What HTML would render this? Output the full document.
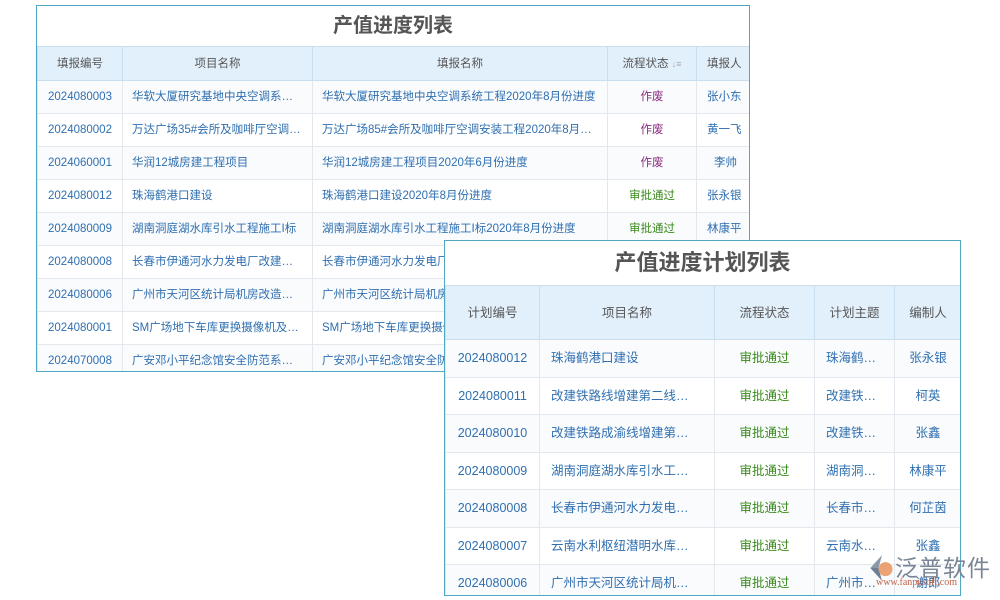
<!DOCTYPE html>
<html><head><meta charset="utf-8"><style>
*{margin:0;padding:0;box-sizing:border-box}
body{width:1000px;height:600px;background:#fff;position:relative;overflow:hidden;font-family:"Liberation Sans","Noto Sans CJK SC",sans-serif}
.t{position:absolute;background:#fff;border:1px solid #4fa7c4;overflow:hidden}
.title{text-align:center;font-weight:bold;color:#555;border-bottom:1px solid #a9cfe6}
table{border-collapse:collapse;table-layout:fixed;position:absolute;left:0}
td,th{border:1px solid #e3e8ee;white-space:nowrap;overflow:hidden;color:#2f6fb0;font-weight:normal;line-height:14px;vertical-align:middle;padding-top:0;padding-bottom:0}
th{background:#e2f0fc;color:#555;border-color:#c9dff0}
tr:nth-child(even) td{background:#fafbfd}
.c{text-align:center}
.n{text-align:center}
.n b{font-weight:normal;position:relative;top:0}
.g{color:#3a8a1c!important;text-align:center}
.p{color:#8a2a80!important;text-align:center}
</style></head><body>

<div class="t" style="left:36px;top:5px;width:714px;height:367px">
<div class="title" style="height:41px;line-height:40px;font-size:20px">产值进度列表</div>
<table style="top:40px;width:730px;font-size:11.5px">
<colgroup><col style="width:85px"><col style="width:190px"><col style="width:295px"><col style="width:89px"><col style="width:71px"></colgroup>
<tr style="height:34px"><th>填报编号</th><th>项目名称</th><th>填报名称</th><th>流程状态 <span style="color:#aaa;font-size:9px">↓≡</span></th><th style="text-align:left;padding-left:10px">填报人</th></tr>
<tr style="height:33px"><td class="n"><b>2024080003</b></td><td style="padding-left:9px">华软大厦研究基地中央空调系…</td><td style="padding-left:9px">华软大厦研究基地中央空调系统工程2020年8月份进度</td><td class="p">作废</td><td style="padding-left:10px">张小东</td></tr>
<tr style="height:33px"><td class="n"><b>2024080002</b></td><td style="padding-left:9px">万达广场35#会所及咖啡厅空调…</td><td style="padding-left:9px">万达广场85#会所及咖啡厅空调安装工程2020年8月…</td><td class="p">作废</td><td style="padding-left:10px">黄一飞</td></tr>
<tr style="height:33px"><td class="n"><b>2024060001</b></td><td style="padding-left:9px">华润12城房建工程项目</td><td style="padding-left:9px">华润12城房建工程项目2020年6月份进度</td><td class="p">作废</td><td style="padding-left:17px">李帅</td></tr>
<tr style="height:33px"><td class="n"><b>2024080012</b></td><td style="padding-left:9px">珠海鹤港口建设</td><td style="padding-left:9px">珠海鹤港口建设2020年8月份进度</td><td class="g">审批通过</td><td style="padding-left:10px">张永银</td></tr>
<tr style="height:33px"><td class="n"><b>2024080009</b></td><td style="padding-left:9px">湖南洞庭湖水库引水工程施工I标</td><td style="padding-left:9px">湖南洞庭湖水库引水工程施工I标2020年8月份进度</td><td class="g">审批通过</td><td style="padding-left:10px">林康平</td></tr>
<tr style="height:33px"><td class="n"><b>2024080008</b></td><td style="padding-left:9px">长春市伊通河水力发电厂改建…</td><td style="padding-left:9px">长春市伊通河水力发电厂改建工程</td><td></td><td></td></tr>
<tr style="height:33px"><td class="n"><b>2024080006</b></td><td style="padding-left:9px">广州市天河区统计局机房改造…</td><td style="padding-left:9px">广州市天河区统计局机房改造</td><td></td><td></td></tr>
<tr style="height:33px"><td class="n"><b>2024080001</b></td><td style="padding-left:9px">SM广场地下车库更换摄像机及…</td><td style="padding-left:9px">SM广场地下车库更换摄像机及</td><td></td><td></td></tr>
<tr style="height:33px"><td class="n"><b>2024070008</b></td><td style="padding-left:9px">广安邓小平纪念馆安全防范系…</td><td style="padding-left:9px">广安邓小平纪念馆安全防范系统</td><td></td><td></td></tr>
</table>
</div>

<div class="t" style="left:444px;top:240px;width:517px;height:356px">
<div class="title" style="height:45px;line-height:44px;font-size:22px">产值进度计划列表</div>
<table style="top:44px;width:516px;font-size:12.5px">
<colgroup><col style="width:94px"><col style="width:175px"><col style="width:100px"><col style="width:80px"><col style="width:67px"></colgroup>
<tr style="height:54px"><th>计划编号</th><th>项目名称</th><th>流程状态</th><th>计划主题</th><th>编制人</th></tr>
<tr style="height:37.5px"><td class="n"><b>2024080012</b></td><td style="padding-left:11px">珠海鹤港口建设</td><td class="g">审批通过</td><td style="padding-left:11px">珠海鹤…</td><td class="c">张永银</td></tr>
<tr style="height:37.5px"><td class="n"><b>2024080011</b></td><td style="padding-left:11px">改建铁路线增建第二线…</td><td class="g">审批通过</td><td style="padding-left:11px">改建铁…</td><td class="c">柯英</td></tr>
<tr style="height:37.5px"><td class="n"><b>2024080010</b></td><td style="padding-left:11px">改建铁路成渝线增建第…</td><td class="g">审批通过</td><td style="padding-left:11px">改建铁…</td><td class="c">张鑫</td></tr>
<tr style="height:37.5px"><td class="n"><b>2024080009</b></td><td style="padding-left:11px">湖南洞庭湖水库引水工…</td><td class="g">审批通过</td><td style="padding-left:11px">湖南洞…</td><td class="c">林康平</td></tr>
<tr style="height:37.5px"><td class="n"><b>2024080008</b></td><td style="padding-left:11px">长春市伊通河水力发电…</td><td class="g">审批通过</td><td style="padding-left:11px">长春市…</td><td class="c">何芷茵</td></tr>
<tr style="height:37.5px"><td class="n"><b>2024080007</b></td><td style="padding-left:11px">云南水利枢纽潜明水库…</td><td class="g">审批通过</td><td style="padding-left:11px">云南水…</td><td class="c">张鑫</td></tr>
<tr style="height:37.5px"><td class="n"><b>2024080006</b></td><td style="padding-left:11px">广州市天河区统计局机…</td><td class="g">审批通过</td><td style="padding-left:11px">广州市…</td><td class="c">谢郎</td></tr>
</table>
</div>

<div style="position:absolute;left:868px;top:552px;width:132px;height:48px">
<svg width="28" height="28" style="position:absolute;left:0;top:2px" viewBox="0 0 24 24"><path d="M12 1 L2 12 L9 12 Z" fill="#8a98a8"/><path d="M9 12 L2 12 L12 23 Z" fill="#6d7f92"/><circle cx="15" cy="13" r="6" fill="#e7935a" opacity="0.85"/></svg>
<div style="position:absolute;left:27px;top:-3px;font-size:23px;color:#7a8595;letter-spacing:1px">泛普软件</div>
<div style="position:absolute;left:8px;top:25px;font-size:10px;color:#c0674a;font-family:'Liberation Serif',serif">www.fanpusoft.com</div>
</div>
</body></html>
